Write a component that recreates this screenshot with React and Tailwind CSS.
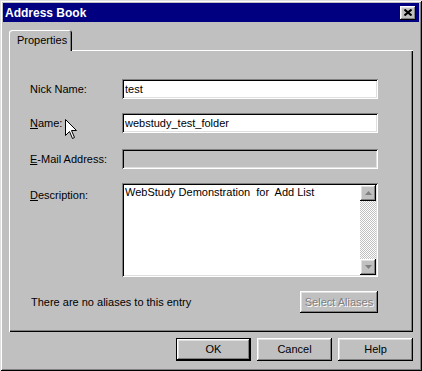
import React from "react";

// Win95 style bevels
const RAISED =
  "shadow-[inset_-1px_-1px_#000,inset_1px_1px_#fff,inset_-2px_-2px_#808080,inset_2px_2px_#dfdfdf]";
const SUNKEN =
  "shadow-[inset_1px_1px_#808080,inset_-1px_-1px_#fff,inset_2px_2px_#000,inset_-2px_-2px_#dfdfdf]";

const FONT = "font-['Liberation_Sans',Arial,sans-serif]";

function Label({ children, accel }) {
  // accel = index of underlined letter
  if (accel === undefined) return <span>{children}</span>;
  return (
    <span>
      {children.slice(0, accel)}
      <span className="underline underline-offset-[1px]">{children[accel]}</span>
      {children.slice(accel + 1)}
    </span>
  );
}

function Field({ value, disabled }) {
  return (
    <div
      className={`h-[20px] w-[256px] flex items-center pl-[3px] ${SUNKEN} ${
        disabled ? "bg-[#c0c0c0]" : "bg-white"
      }`}
    >
      {value}
    </div>
  );
}

function ScrollBtn({ down }) {
  return (
    <div className={`w-[16px] h-[16px] bg-[#c0c0c0] flex items-center justify-center ${RAISED}`}>
      <svg width="7" height="4" viewBox="0 0 7 4">
        {down ? (
          <polygon points="0,0 7,0 3.5,4" fill="#808080" />
        ) : (
          <polygon points="0,4 7,4 3.5,0" fill="#808080" />
        )}
      </svg>
    </div>
  );
}

function Button({ children, isDefault, className = "" }) {
  return (
    <div
      className={`w-[75px] h-[23px] bg-[#c0c0c0] flex items-center justify-center ${
        isDefault ? "border border-black" : ""
      } ${className}`}
    >
      <div className={`w-full h-full flex items-center justify-center ${RAISED}`}>{children}</div>
    </div>
  );
}

export default function App() {
  return (
    <div
      className={`w-[422px] h-[371px] bg-[#c0c0c0] p-[3px] text-[11px] text-black relative ${FONT}
                  shadow-[inset_1px_1px_#dfdfdf,inset_-1px_-1px_#000,inset_2px_2px_#fff,inset_-2px_-2px_#808080]`}
    >
      {/* Title bar */}
      <div className="h-[19px] bg-[#000080] flex items-center justify-between pl-[2px] pr-[3px]">
        <span className="text-white font-bold text-[12px] leading-none">Address Book</span>
        <div className={`w-[16px] h-[14px] bg-[#c0c0c0] flex items-center justify-center ${RAISED}`}>
          <svg width="8" height="7" viewBox="0 0 8 7">
            <path d="M0.5 0.5 L7.5 6.5 M7.5 0.5 L0.5 6.5" stroke="#000" strokeWidth="2" />
          </svg>
        </div>
      </div>

      {/* Tab strip */}
      <div className="mt-[8px] ml-[6px] flex">
        <div
          className="relative z-10 -mb-[1px] h-[21px] w-[63px] bg-[#c0c0c0] rounded-t-[3px] flex items-center pl-[8px]
                     shadow-[inset_1px_1px_#fff,inset_-1px_0_#000,inset_-2px_0_#808080]"
        >
          Properties
        </div>
      </div>

      {/* Panel */}
      <div
        className="ml-[6px] w-[404px] h-[282px] pt-[29px] pl-[21px]
                   shadow-[inset_1px_1px_#fff,inset_-1px_-1px_#000,inset_-2px_-2px_#808080]"
      >
        <div className="grid grid-cols-[92px_256px]">
          <div className="h-[20px] flex items-center">
            <Label>Nick Name:</Label>
          </div>
          <Field value="test" />

          <div className="h-[20px] mt-[14px] flex items-center">
            <Label accel={0}>Name:</Label>
          </div>
          <div className="mt-[14px]">
            <Field value="webstudy_test_folder" />
          </div>

          <div className="h-[20px] mt-[16px] flex items-center">
            <Label accel={0}>E-Mail Address:</Label>
          </div>
          <div className="mt-[16px]">
            <Field value="" disabled />
          </div>

          <div className="mt-[14px] pt-[4px]">
            <Label accel={0}>Description:</Label>
          </div>
          <div className={`mt-[14px] h-[94px] bg-white flex p-[2px] ${SUNKEN}`}>
            <div className="flex-1 pl-[1px] pt-[1px] whitespace-pre leading-[13px]">
              WebStudy Demonstration  for  Add List
            </div>
            <div className="w-[16px] flex flex-col">
              <ScrollBtn />
              <div className="flex-1 bg-[repeating-conic-gradient(#c0c0c0_0_25%,#fff_0_50%)] bg-[length:2px_2px]" />
              <ScrollBtn down />
            </div>
          </div>
        </div>

        <div className="mt-[14px] flex items-center w-[348px] justify-between">
          <span className="pl-[1px]">There are no aliases to this entry</span>
          <div className={`w-[78px] h-[22px] flex items-center justify-center ${RAISED}`}>
            <span className="text-[#808080] [text-shadow:1px_1px_0_#fff]">Select Aliases</span>
          </div>
        </div>
      </div>

      {/* Footer buttons */}
      <div className="mt-[6px] flex justify-end gap-[6px] pr-[6px]">
        <Button isDefault>OK</Button>
        <Button>Cancel</Button>
        <Button>Help</Button>
      </div>

      {/* Mouse pointer */}
      <svg
        className="absolute left-[65px] top-[119px]"
        width="13"
        height="21"
        viewBox="0 0 13 21"
      >
        <path
          d="M0.5 0.5 L0.5 16.5 L4.5 12.5 L7.5 19.5 L9.5 18.5 L6.5 11.5 L11.5 11.5 Z"
          fill="#fff"
          stroke="#000"
          strokeWidth="1"
        />
      </svg>
    </div>
  );
}
